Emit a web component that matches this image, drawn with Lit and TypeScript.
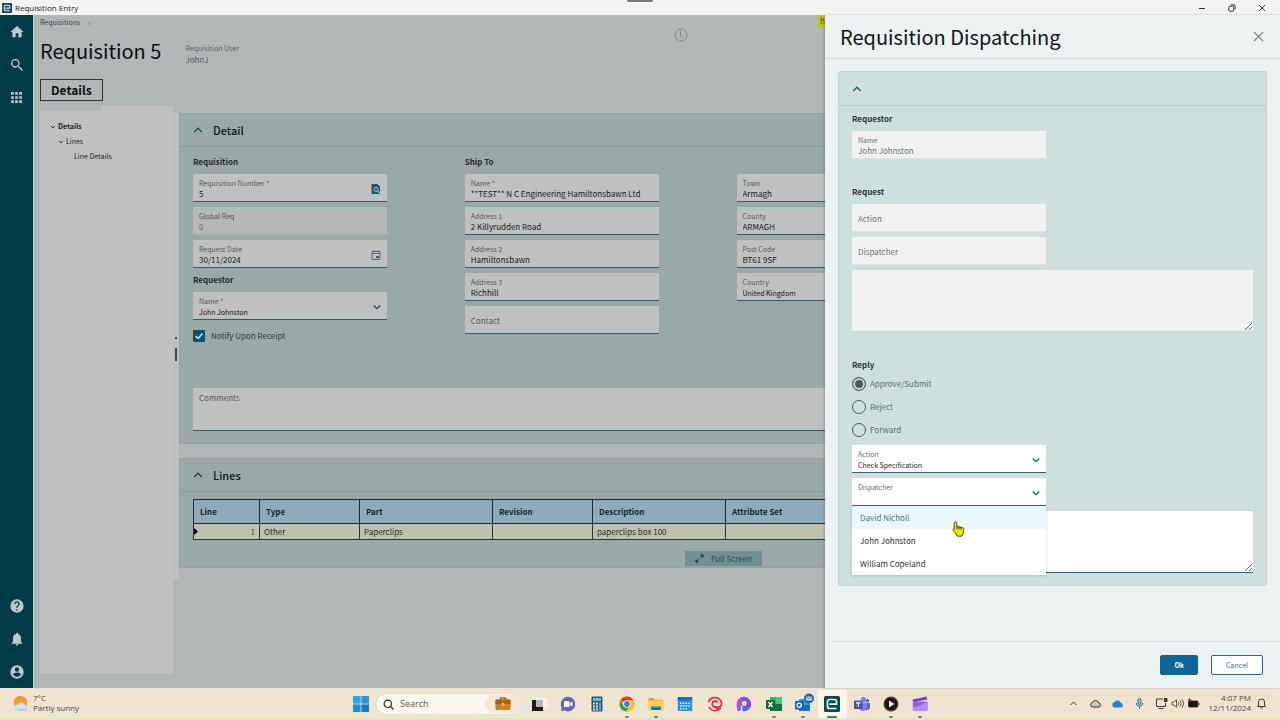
import { LitElement, html, svg, css, nothing } from "lit";
import { customElement, state } from "lit/decorators.js";
import { classMap } from "lit/directives/class-map.js";

const chevronUp = html`<svg class="chev" viewBox="0 0 10 10" aria-hidden="true"><path d="M1.2 7 5 3.2 8.8 7" /></svg>`;
const chevronDown = html`<svg class="chev chev-field" viewBox="0 0 10 10" aria-hidden="true"><path d="M1.8 3.5 5 6.7 8.2 3.5" /></svg>`;
const treeArrow = html`<svg class="tree-arrow" viewBox="0 0 6 6" aria-hidden="true"><path d="M1 2 3 4 5 2" /></svg>`;

const railIcons: Record<string, unknown> = {
  Home: svg`<path d="M10 20v-6h4v6h5v-8h3L12 3 2 12h3v8z" />`,
  Search: svg`<path d="M15.5 14h-.8l-.3-.3A6.5 6.5 0 1 0 13.700 14.400l.3.3v.8l5.400 5.500 1.600-1.600zM9.500 14a4.500 4.500 0 1 1 0-9 4.500 4.500 0 0 1 0 9z" />`,
  Menu: svg`<path d="M2 2h5v5H2zM9.500 2h5v5h-5zM17 2h5v5h-5zM2 9.500h5v5H2zM9.500 9.500h5v5h-5zM17 9.500h5v5h-5zM2 17h5v5H2zM9.500 17h5v5h-5zM17 17h5v5h-5z" />`,
  Help: svg`<path d="M12 2a10 10 0 1 0 0 20 10 10 0 0 0 0-20zm1 17h-2v-2h2zm2.070-7.750-.9.920C13.450 12.900 13 13.500 13 15h-2v-.5c0-1.100.450-2.100 1.170-2.830l1.240-1.260A2 2 0 1 0 10 9H8a4 4 0 1 1 8 0c0 .88-.36 1.680-.93 2.250z" />`,
  Notifications: svg`<path d="M12 22a2 2 0 0 0 2-2h-4a2 2 0 0 0 2 2zm6-6v-5c0-3.070-1.640-5.640-4.500-6.320V4a1.500 1.500 0 0 0-3 0v.68C7.630 5.360 6 7.920 6 11v5l-2 2v1h16v-1z" />`,
  Account: svg`<path d="M12 2a10 10 0 1 0 0 20 10 10 0 0 0 0-20zm0 3a3.300 3.300 0 1 1 0 6.600A3.300 3.300 0 0 1 12 5zm0 14.200a7.200 7.200 0 0 1-6-3.220c.03-1.990 4-3.080 6-3.080s5.970 1.090 6 3.080a7.200 7.200 0 0 1-6 3.220z" />`,
};

const epicor = svg`<rect width="16" height="16" rx="1.500" fill="#0b4a54" /><path d="M12.500 12.500H5.500a2 2 0 0 1-2-2v-5a2 2 0 0 1 2-2h5a2 2 0 0 1 2 2v2.700h-7" fill="none" stroke="#e8f4f4" stroke-width="1.700" />`;

const taskIcons: { name: string; art: unknown; open?: boolean; active?: boolean }[] = [
  { name: "Task view", art: svg`<rect x="5" y="2" width="11" height="9" fill="#f6f4f0" /><path d="M1 4h4v7h7v4H1z" fill="#1d1b1a" /><rect x="5" y="4" width="7" height="7" fill="#b9b5b2" />` },
  { name: "Chat", art: svg`<path d="M8 .8a7.300 7.300 0 1 1-3.500 13.700L.8 15.300l.9-3.600A7.300 7.300 0 0 1 8 .8z" fill="#6a62b8" /><rect x="4" y="5" width="5.500" height="6" rx="1" fill="#fff" /><path d="m10 7.300 2.500-1.800v5L10 8.700z" fill="#fff" />` },
  { name: "Calculator", art: svg`<rect x="2.500" y=".5" width="11" height="15" rx="1" fill="#38566e" /><rect x="4" y="2" width="8" height="3" fill="#58c3e8" /><g fill="#d8e2e8"><rect x="4" y="6.500" width="2" height="2" /><rect x="7" y="6.500" width="2" height="2" /><rect x="4" y="9.500" width="2" height="2" /><rect x="7" y="9.500" width="2" height="2" /><rect x="4" y="12.500" width="2" height="2" /><rect x="7" y="12.500" width="2" height="2" /></g><path d="M10 6.500h2v8h-2z" fill="#3fa9dc" />` },
  { name: "Chrome", open: true, art: svg`<circle cx="8" cy="8" r="7.500" fill="#fbc116" /><path d="M8 8 1.500 4.250A7.500 7.500 0 0 1 14.500 4.250z" fill="#e33b2e" /><path d="M1.500 4.250A7.500 7.500 0 0 0 7.200 15.460L11 9.700 8 8 4.900 10z" fill="#2da24c" /><path d="M8 4.250h6.500A7.500 7.500 0 0 1 7.200 15.460L11.200 9.800z" fill="#fbc116" /><circle cx="8" cy="8" r="3.800" fill="#fff" /><circle cx="8" cy="8" r="2.900" fill="#3f7de8" />` },
  { name: "File Explorer", open: true, art: svg`<path d="M.5 2h5l1.500 1.800h8V6H.5z" fill="#e3a325" /><rect x=".5" y="4.500" width="15" height="9.500" rx="1" fill="#fbd04f" /><path d="M3 10.500h10V14H3z" fill="#2f86c8" /><path d="M4.500 12h7v2h-7z" fill="#1d64a0" />` },
  { name: "Calendar", art: svg`<rect x=".8" y="1" width="14.400" height="14" rx="1" fill="#2a90d6" /><rect x=".8" y="1" width="14.400" height="3.500" fill="#1a6fb4" /><g fill="#e9f5fd"><path d="M3 6.500h1.500V8H3zM5.800 6.500h1.500V8H5.800zM8.600 6.500h1.500V8H8.600zM11.400 6.500h1.500V8h-1.500zM3 9.200h1.500v1.500H3zM5.800 9.200h1.500v1.500H5.800zM8.600 9.200h1.500v1.500H8.600zM11.400 9.200h1.500v1.500h-1.500zM3 12h1.500v1.500H3zM5.800 12h1.500v1.500H5.800zM8.600 12h1.500v1.500H8.600z" /></g>` },
  { name: "Recorder", art: svg`<circle cx="8" cy="8" r="7.500" fill="#f4dcd6" /><g fill="none" stroke="#d3343c"><path d="M1.500 6A6.800 6.800 0 0 1 14.600 7.500c.2 3-3 4.500-5.600 3.200" stroke-width="1.800" /><path d="M14 11.500A7 7 0 0 1 2 11" stroke-width="1.500" /><path d="M10.800 6.500A3 3 0 1 0 8 11l3.500 2.800" stroke-width="1.800" /></g>` },
  { name: "Loop", art: svg`<path d="M8 .8a7.200 7.200 0 0 1 0 14.400c-1.500 0-1.500-1.200-1.500-2.200V9.500H4.800c0 3-.2 5.700-1.800 5.700S.8 12 .8 8A7.200 7.200 0 0 1 8 .8z" fill="#7a4fdc" /><path d="M8 .8A7.200 7.200 0 0 0 .8 8c0 4 .6 7.200 2.200 7.200 1 0 1.500-1.200 1.700-3C4 7 5.500 4 10 1z" fill="#b04be0" /><path d="M8 15.200c-1.500 0-1.500-1.200-1.500-2.200l8-3A7.200 7.200 0 0 1 8 15.200z" fill="#2e7fe6" /><circle cx="8.300" cy="7.500" r="2.400" fill="#efe6d2" />` },
  { name: "Excel", open: true, art: svg`<rect x="4" y="1" width="12" height="14" rx="1" fill="#2fae6c" /><path d="M10 1h5a1 1 0 0 1 1 1v6h-6z" fill="#3ecb86" /><path d="M4 8h12v6a1 1 0 0 1-1 1H5a1 1 0 0 1-1-1z" fill="#17703f" /><rect y="4" width="9" height="9" rx="1" fill="#12693a" /><path d="m2.500 6 4 5m0-5-4 5" stroke="#fff" stroke-width="1.300" />` },
  { name: "Outlook", open: true, art: svg`<rect x="4" y="3" width="11" height="12" rx="1" fill="#2f97e0" /><path d="M4 9h11v5a1 1 0 0 1-1 1H4z" fill="#1b6fc0" /><rect y="5" width="8.500" height="8.500" rx="1" fill="#0f5fb0" /><circle cx="4.200" cy="9.200" r="2.100" fill="none" stroke="#fff" stroke-width="1.300" /><circle cx="14" cy="2.500" r="5" fill="#2468a8" /><rect x="11.200" y=".6" width="5.600" height="3.900" fill="#d5e8f8" /><path d="m11.200.8 2.800 2 2.800-2" fill="none" stroke="#2468a8" stroke-width=".8" />` },
  { name: "Epicor", open: true, active: true, art: epicor },
  { name: "Teams", art: svg`<circle cx="13.500" cy="4.800" r="1.800" fill="#5b62c6" /><circle cx="9.500" cy="3.500" r="2.600" fill="#7b83eb" /><path d="M11 7h5v4a3 3 0 0 1-4 2.800z" fill="#5b62c6" /><path d="M5 6.500h8v4.500a4 4 0 0 1-8 0z" fill="#7b83eb" /><rect y="4.500" width="8.500" height="8.500" rx="1" fill="#4a52b4" /><path d="M2 6.800h4.500M4.250 6.800V11" stroke="#fff" stroke-width="1.200" />` },
  { name: "Media player", open: true, art: svg`<circle cx="8" cy="8" r="7.500" fill="#53403a" /><circle cx="8" cy="8" r="6.200" fill="#191718" /><path d="M6 4.500 11.500 8 6 11.500z" fill="#f3f1ee" /><path d="M1.500 12A7.500 7.500 0 0 0 8 15.500" stroke="#e0813a" fill="none" />` },
  { name: "Clipchamp", open: true, art: svg`<path d="M.5 3.500 14.500.5l.8 3L1.200 6.200z" fill="#7b3fd0" /><rect x=".8" y="5.500" width="14.700" height="9.500" rx="1.200" fill="#9a5fe6" /><path d="M.8 11c5 0 9-2 14.700-5v8a1 1 0 0 1-1 1H2a1.200 1.200 0 0 1-1.200-1.200z" fill="#b98af0" />` },
];

interface FieldSpec {
  id: string;
  label: string;
  value?: string;
  kind?: "text" | "select";
  tone?: "dim" | "locked" | "off" | "live";
  icon?: unknown;
}

const lookupIcon = html`<svg class="field-icon" viewBox="0 0 12 12" aria-hidden="true"><path d="M1.500 1h6l2.500 2.500V11h-8.500z" fill="#1d5873" /><circle cx="6" cy="6.300" r="2" fill="none" stroke="#c0c0c0" stroke-width="1" /><path d="m7.400 7.700 2.600 2.800" stroke="#c0c0c0" stroke-width="1.100" /></svg>`;
const dateIcon = html`<svg class="field-icon" viewBox="0 0 12 12" aria-hidden="true"><rect x="2" y="2.500" width="8" height="8" rx=".8" fill="none" stroke="#4a606c" stroke-width=".9" /><path d="M4 1v2M8 1v2M2 4.500h8" stroke="#4a606c" stroke-width=".9" /><rect x="6.300" y="7" width="2.400" height="2.200" fill="#2f4450" /></svg>`;

@customElement("app-root")
export class AppRoot extends LitElement {
  @state() private reply = "Approve/Submit";
  @state() private hovered = "David Nicholl";

  static styles = css`
    :host {
      display: flex;
      flex-direction: column;
      height: 100vh;
      overflow: hidden;
      font-family: "Noto Sans CJK SC", "Noto Sans", sans-serif;
      font-size: 8px;
      line-height: 12px;
      color: #1c2426;
    }
    * { box-sizing: border-box; }
    button, input, select, textarea { font: inherit; color: inherit; margin: 0; }
    button { border: 0; background: none; padding: 0; }
    h1, h2, h3, p, ul { margin: 0; padding: 0; font-weight: inherit; font-size: inherit; }
    ul { list-style: none; }

    .titlebar {
      position: relative;
      flex: none;
      display: flex;
      align-items: center;
      height: 15px;
      padding: 0 10px 0 2px;
      gap: 3px;
      background: #f3f3f3;
      font-family: "Open Sans", sans-serif;
      font-size: 8px;
      color: #222;
    }
    .titlebar-logo { width: 10px; height: 10px; }
    .grip { position: absolute; left: 50%; top: 0; width: 26px; height: 2px; margin-left: -13px; background: #77757a; border-radius: 0 0 2px 2px; }
    .window-buttons { display: flex; gap: 14px; margin-left: auto; }
    .window-button { display: flex; width: 16px; justify-content: center; }
    .window-button svg { width: 8px; height: 8px; fill: none; stroke: #333; stroke-width: 1; }

    .work { position: relative; flex: 1; min-height: 0; display: flex; }
    .rail { flex: none; width: 33px; display: flex; flex-direction: column; justify-content: space-between; background: #023c48; }
    .rail-group { display: flex; flex-direction: column; }
    .rail-button { height: 33px; display: flex; align-items: center; justify-content: center; }
    .rail-button svg { width: 16px; height: 16px; fill: #bdc9cc; }
    .rail-button .icon-small { width: 13px; height: 13px; }

    .page { flex: 1; min-width: 0; display: flex; flex-direction: column; padding: 0 0 14px 6px; border-left: 1px solid #c2cccc; background: #b0b7b7; }
    .topline { display: flex; align-items: flex-start; height: 22px; }
    .crumbs { display: flex; gap: 8px; padding-top: 1px; font-size: 7px; color: #3d4646; }
    .crumbs a { color: inherit; text-decoration: none; }
    .top-tools { display: flex; justify-content: space-between; align-items: flex-start; margin-left: auto; width: 606px; }
    .clock { width: 14px; height: 14px; margin-top: 13px; fill: none; stroke: #7b8686; }
    .marker { width: 462px; height: 13px; padding-left: 2px; background: #c1c50c; color: #4b4c10; font-size: 8px; }
    .heading { display: flex; align-items: flex-start; gap: 24px; height: 42px; }
    .title { font-size: 20px; line-height: 28px; color: #0c0f10; }
    .user { padding-top: 6px; line-height: 11px; color: #586162; font-size: 7px; }
    .user-value { font-size: 8px; }
    .tab { align-self: flex-start; height: 22px; padding: 0 10px; border: 1px solid #2f3436; font-size: 12px; line-height: 20px; font-weight: 700; color: #0c0f10; }

    .columns { flex: 1; min-height: 0; display: flex; align-items: stretch; padding-top: 5px; }
    .tree { width: 133px; background: #c0c0c0; color: #1e2425; font-size: 7px; }
    .tree-notch { width: 61px; height: 5px; background: #b0b7b7; }
    .tree-list { padding: 8px 0 0 10px; line-height: 15px; }
    .tree-item { display: flex; align-items: center; gap: 2px; }
    .tree-strong { font-weight: 700; }
    .tree-two { padding-left: 8px; }
    .tree-three { padding-left: 24px; }
    .tree-arrow { width: 6px; height: 6px; fill: none; stroke: #3b4446; stroke-width: 1; }
    .stage { flex: 1; min-width: 0; align-self: flex-start; display: flex; padding-top: 7px; }
    .splitter { width: 6px; margin-bottom: -12px; padding-top: 5px; background: #bebfbf; display: flex; flex-direction: column; align-items: center; justify-content: center; gap: 9px; }
    .splitter-dot { width: 2px; height: 2px; background: #222; border-radius: 1px; }
    .splitter-bar { width: 2px; height: 13px; background: #454545; }
    .cards { flex: 1; min-width: 0; display: flex; flex-direction: column; gap: 14px; padding-right: 12px; }
    .card { background: #9aa8a7; border: 1px solid #93a2a1; }
    .card-head { display: flex; align-items: center; gap: 10px; height: 33px; padding: 0 13px; border-bottom: 1px solid #8a9c9b; }
    .card-title { font-size: 11px; line-height: 18px; font-weight: 500; color: #101617; }
    .chev { width: 10px; height: 10px; fill: none; stroke: #1c4a5c; stroke-width: 1.3; }
    .card-body { padding: 8px 13px 12px; }
    .grid { display: grid; grid-template-columns: repeat(4, 1fr); gap: 26px; min-height: 233px; }
    .stack { display: flex; flex-direction: column; gap: 5px; max-width: 194px; }
    .group { line-height: 14px; font-weight: 700; color: #222c2e; }

    .field { display: flex; align-items: center; height: 28px; padding: 3px 5px 0 6px; background: #c0c0c0; border-bottom: 1px solid #33596b; color: #15191a; }
    .field-text { flex: 1; min-width: 0; display: flex; flex-direction: column; }
    .field-label { font-size: 7px; line-height: 10px; color: #515859; }
    .field-input { width: 100%; height: 12px; line-height: 12px; padding: 0; border: 0; outline: 0; background: transparent; appearance: none; text-overflow: ellipsis; opacity: 1; }
    .field-select { font-size: 7px; }
    .field-empty { padding-top: 2px; }
    .field-empty .field-text { display: grid; }
    .field-empty .field-label, .field-empty .field-input { grid-area: 1 / 1; font-size: 8px; line-height: 12px; }
    .field-icon { width: 12px; height: 12px; }
    .chev-field { stroke: #2b4550; }
    .tone-locked { background: #b7b7b8; border-bottom-color: #a5adad; color: #5c6263; }
    .tone-off { background: #f1f1f1; border-bottom-color: #dde3e3; color: #6c7273; }
    .tone-off .field-label { color: #6a7071; }
    .tone-live { background: #fff; border-bottom-color: #2f6478; color: #1f2527; }
    .tone-live .field-label { color: #666d6f; }
    .tone-live .chev-field { stroke: #14606b; }

    .tick { display: flex; align-items: center; gap: 6px; padding-top: 5px; color: #333b3c; }
    .tick-box { display: grid; width: 12px; height: 12px; }
    .tick-box input { grid-area: 1 / 1; appearance: none; width: 12px; height: 12px; background: #11506e; border-radius: 1px; }
    .tick-box svg { grid-area: 1 / 1; width: 12px; height: 12px; fill: none; stroke: #dbe5e8; stroke-width: 1.500; pointer-events: none; }
    .memo { display: grid; height: 43px; }
    .memo-label { grid-area: 1 / 1; padding: 4px 6px; color: #515859; z-index: 1; pointer-events: none; }
    .memo-input { grid-area: 1 / 1; width: 100%; border: 0; border-bottom: 1px solid #33596b; background: #c0c0c0; resize: none; }

    .lines-body { padding: 7px 13px 1px; }
    .lines { width: 100%; border-collapse: collapse; table-layout: fixed; }
    .lines th { height: 24px; padding: 0 6px; background: #8dabb8; border: 1px solid #1d2a30; text-align: left; font-weight: 700; color: #15252c; }
    .lines td { height: 16px; padding: 0 4px; background: #bfbfae; border: 1px solid #2d3335; line-height: 14px; color: #23292a; }
    .lines .num { text-align: right; color: #4a5051; padding: 0 4px 0 0; }
    .num-cell { display: flex; align-items: center; justify-content: space-between; }
    .row-mark { width: 4px; height: 7px; fill: #000; }
    .col-line { width: 66px; } .col-m { width: 100px; } .col-l { width: 133px; }
    .full-row { display: flex; justify-content: center; padding-top: 11px; }
    .full { display: flex; align-items: center; gap: 7px; height: 15px; padding: 0 10px; background: #6e9294; color: #33474b; }
    .full svg { width: 9px; height: 9px; fill: none; stroke: #17292e; stroke-width: 1; }

    .drawer { position: absolute; top: 0; right: 0; bottom: 0; width: 455px; display: flex; flex-direction: column; background: #ecf2f2; box-shadow: -1px 0 2px rgba(60, 80, 80, 0.35); }
    .drawer-head { display: flex; align-items: center; justify-content: space-between; height: 44px; padding: 0 16px 0 15px; border-bottom: 1px solid #d0d9d9; }
    .drawer-title { font-size: 20px; line-height: 28px; color: #0f1516; }
    .close { display: flex; }
    .close svg { width: 11px; height: 11px; fill: none; stroke: #7d8385; stroke-width: 1.200; }
    .drawer-main { flex: 1; padding: 12px 13px 0; }
    .panel { background: #cfdfde; border: 1px solid #c3d6d5; border-radius: 2px; }
    .panel-head { display: flex; align-items: center; height: 34px; padding: 0 13px; border-bottom: 1px solid #b3cdcd; }
    .panel-head .chev { stroke: #175f70; }
    .panel-body { display: flex; flex-direction: column; padding: 6px 13px 12px; }
    .panel-body .group { color: #2b3537; }
    .requestor, .request, .choice { display: flex; flex-direction: column; gap: 5px; }
    .request { padding-top: 26px; }
    .choice { padding-top: 26px; }
    .panel-body .field { width: 194px; }
    .area { width: 100%; height: 62px; display: block; border: 0; border-bottom: 1px solid #cdd5d5; background: #f1f1f1; resize: vertical; outline: 0; }
    .area-live { background: #fff; border-bottom-color: #2f6478; }
    .radios { display: flex; flex-direction: column; gap: 9px; padding: 0 0 3px; border: 0; margin: 0; }
    .radio { display: flex; align-items: center; gap: 4px; height: 14px; color: #5f6c6d; }
    .radio input { appearance: none; width: 14px; height: 14px; border: 1px solid #4c585a; border-radius: 50%; box-shadow: inset 0 0 0 1px #cfdfde; }
    .radio input:checked { background: #4c585a; box-shadow: inset 0 0 0 2px #cfdfde; }
    .combo { position: relative; width: 194px; }
    .menu { position: absolute; left: 0; top: 28px; width: 100%; z-index: 2; background: #fff; box-shadow: 0 1px 3px rgba(40, 60, 60, 0.2); }
    .option { height: 23px; padding: 0 8px; line-height: 23px; color: #2a3032; }
    .option-on { background: #ebf8fd; color: #477583; }
    .pointer { position: absolute; left: 100px; top: 15px; width: 13px; height: 16px; }
    .drawer-foot { display: flex; justify-content: flex-end; align-items: flex-start; gap: 13px; height: 47px; margin-left: 7px; padding: 13px 17px 0 0; border-top: 1px solid #d8e0e0; }
    .btn { height: 20px; padding: 0 14px; border: 1px solid #0c648f; border-radius: 2px; font-size: 7px; line-height: 18px; }
    .btn-main { background: #0e6696; color: #fff; font-weight: 700; padding: 0 13px; }
    .btn-plain { background: #fff; color: #3d6f83; border-color: #1f6c82; }

    .taskbar { flex: none; display: grid; grid-template-columns: 1fr auto 1fr; align-items: center; height: 32px; background: #eee4d0; border-bottom: 2px solid #dcebb5; font-family: "Open Sans", sans-serif; font-size: 8px; line-height: 10px; color: #4d4740; }
    .weather { display: flex; align-items: center; gap: 4px; padding-left: 13px; }
    .weather svg { width: 16px; height: 16px; }
    .apps { display: flex; align-items: center; padding-top: 2px; }
    .start { width: 31px; display: flex; justify-content: center; }
    .start svg { width: 16px; height: 16px; }
    .find { display: flex; align-items: center; width: 145px; height: 20px; padding-left: 7px; gap: 6px; background: #faf6ec; border-radius: 10px; box-shadow: 0 0 1px #b9ad98; }
    .find svg { width: 11px; height: 11px; fill: none; stroke: #2e2b28; stroke-width: 1.200; }
    .find input { flex: 1; min-width: 0; border: 0; outline: 0; background: none; padding: 0; font-size: 9px; }
    .find input::placeholder { color: #5b564f; opacity: 1; }
    .find .briefcase { width: 36px; height: 18px; border-radius: 9px; background: #f1e8da; stroke: none; }
    .pins { display: grid; grid-template-columns: repeat(14, 1fr); width: 411px; margin-left: 3px; }
    .pin { position: relative; display: flex; justify-content: center; align-items: center; height: 28px; }
    .pin svg { width: 16px; height: 16px; overflow: visible; }
    .pin-active { background: #faf5ea; border-radius: 2px; }
    .pin-active svg { border-radius: 2px; }
    .pin-dot { position: absolute; left: 50%; bottom: 0; width: 4px; height: 2px; margin-left: -2px; border-radius: 1px; background: #857b6c; }
    .pin-active .pin-dot { width: 10px; margin-left: -5px; background: #2379a8; }
    .tray { display: flex; align-items: center; justify-content: flex-end; padding-right: 12px; gap: 9px; }
    .tray svg { width: 13px; height: 13px; fill: none; stroke: #3a352f; stroke-width: 1; }
    .tray-tight { display: flex; gap: 3px; }
    .tray-end { display: flex; align-items: center; gap: 4px; }
    .when { text-align: right; }
  `;

  private field(f: FieldSpec) {
    const tone = f.tone ?? "dim";
    const off = tone === "locked" || tone === "off";
    const select = f.kind === "select";
    return html`<div class=${classMap({ field: true, [`tone-${tone}`]: true, "field-empty": f.value === undefined })}>
      <div class="field-text">
        <label class="field-label" for=${f.id}>${f.label}</label>
        ${select
          ? html`<select class="field-input field-select" id=${f.id}><option>${f.value}</option></select>`
          : html`<input class="field-input" id=${f.id} type="text" .value=${f.value ?? ""} ?disabled=${off} />`}
      </div>
      ${f.icon ?? nothing}
    </div>`;
  }

  private railButton(name: string, small = false) {
    return html`<button class="rail-button" aria-label=${name}>
      <svg class=${classMap({ "icon-small": small })} viewBox="0 0 24 24">${railIcons[name]}</svg>
    </button>`;
  }

  private titlebar() {
    return html`<header class="titlebar">
      <svg class="titlebar-logo" viewBox="0 0 16 16" aria-hidden="true">${epicor}</svg>
      <span>Requisition Entry</span>
      <span class="grip"></span>
      <div class="window-buttons">
        <button class="window-button" aria-label="Minimize"><svg viewBox="0 0 8 8"><path d="M1 4.500h6" /></svg></button>
        <button class="window-button" aria-label="Restore"><svg viewBox="0 0 8 8"><rect x=".8" y="2.200" width="5" height="5" rx="1" /><path d="M2.800.8h3a1.400 1.400 0 0 1 1.400 1.400v3" /></svg></button>
        <button class="window-button" aria-label="Close window"><svg viewBox="0 0 8 8"><path d="m1 1 6 6M7 1 1 7" /></svg></button>
      </div>
    </header>`;
  }

  private detailCard() {
    return html`<section class="card">
      <div class="card-head">${chevronUp}<h2 class="card-title">Detail</h2></div>
      <div class="card-body">
        <div class="grid">
          <div class="stack">
            <h3 class="group">Requisition</h3>
            ${this.field({ id: "req-number", label: "Requisition Number *", value: "5", icon: lookupIcon })}
            ${this.field({ id: "global-req", label: "Global Req", value: "0", tone: "locked" })}
            ${this.field({ id: "req-date", label: "Request Date", value: "30/11/2024", icon: dateIcon })}
            <h3 class="group">Requestor</h3>
            ${this.field({ id: "req-name", label: "Name *", value: "John Johnston", kind: "select", icon: chevronDown })}
            <label class="tick">
              <span class="tick-box"><input type="checkbox" checked /><svg viewBox="0 0 12 12"><path d="m2.500 6 2.500 2.500 4.500-5" /></svg></span>
              Notify Upon Receipt
            </label>
          </div>
          <div class="stack">
            <h3 class="group">Ship To</h3>
            ${this.field({ id: "ship-name", label: "Name *", value: "**TEST** N C Engineering Hamiltonsbawn Ltd" })}
            ${this.field({ id: "ship-a1", label: "Address 1", value: "2 Killyrudden Road" })}
            ${this.field({ id: "ship-a2", label: "Address 2", value: "Hamiltonsbawn" })}
            ${this.field({ id: "ship-a3", label: "Address 3", value: "Richhill" })}
            ${this.field({ id: "ship-contact", label: "Contact" })}
          </div>
          <div class="stack">
            <h3 class="group">&nbsp;</h3>
            ${this.field({ id: "ship-town", label: "Town", value: "Armagh" })}
            ${this.field({ id: "ship-county", label: "County", value: "ARMAGH" })}
            ${this.field({ id: "ship-post", label: "Post Code", value: "BT61 9SF" })}
            ${this.field({ id: "ship-country", label: "Country", value: "United Kingdom", kind: "select" })}
          </div>
        </div>
        <div class="memo">
          <label class="memo-label" for="comments">Comments</label>
          <textarea class="memo-input" id="comments"></textarea>
        </div>
      </div>
    </section>`;
  }

  private linesCard() {
    return html`<section class="card">
      <div class="card-head">${chevronUp}<h2 class="card-title">Lines</h2></div>
      <div class="lines-body">
        <table class="lines">
          <colgroup><col class="col-line" /><col class="col-m" /><col class="col-l" /><col class="col-m" /><col class="col-l" /><col /></colgroup>
          <thead><tr><th>Line</th><th>Type</th><th>Part</th><th>Revision</th><th>Description</th><th>Attribute Set</th></tr></thead>
          <tbody><tr>
            <td class="num"><div class="num-cell"><svg class="row-mark" viewBox="0 0 4 7"><path d="M0 0 4 3.500 0 7z" /></svg>1</div></td>
            <td>Other</td><td>Paperclips</td><td></td><td>paperclips box 100</td><td></td>
          </tr></tbody>
        </table>
        <div class="full-row">
          <button class="full"><svg viewBox="0 0 9 9"><path d="M5.500 3.500 8 1M5.500 1H8v2.500M3.500 5.500 1 8M1 5.500V8h2.500" /></svg>Full Screen</button>
        </div>
      </div>
    </section>`;
  }

  private drawer() {
    const people = ["David Nicholl", "John Johnston", "William Copeland"];
    return html`<aside class="drawer" role="dialog" aria-labelledby="drawer-title">
      <div class="drawer-head">
        <h2 class="drawer-title" id="drawer-title">Requisition Dispatching</h2>
        <button class="close" aria-label="Close"><svg viewBox="0 0 11 11"><path d="m1 1 9 9M10 1l-9 9" /></svg></button>
      </div>
      <div class="drawer-main">
        <section class="panel">
          <div class="panel-head">${chevronUp}</div>
          <div class="panel-body">
            <div class="requestor">
              <h3 class="group">Requestor</h3>
              ${this.field({ id: "d-name", label: "Name", value: "John Johnston", tone: "off" })}
            </div>
            <div class="request">
              <h3 class="group">Request</h3>
              ${this.field({ id: "d-action", label: "Action", tone: "off" })}
              ${this.field({ id: "d-disp", label: "Dispatcher", tone: "off" })}
              <textarea class="area" aria-label="Request comment" disabled></textarea>
            </div>
            <div class="choice">
              <h3 class="group" id="reply-label">Reply</h3>
              <div class="radios" role="radiogroup" aria-labelledby="reply-label">
                ${["Approve/Submit", "Reject", "Forward"].map(
                  (r) => html`<label class="radio"><input type="radio" name="reply" .checked=${this.reply === r} @change=${() => (this.reply = r)} />${r}</label>`
                )}
              </div>
              ${this.field({ id: "r-action", label: "Action", value: "Check Specification", kind: "select", tone: "live", icon: chevronDown })}
              <div class="combo">
                ${this.field({ id: "r-disp", label: "Dispatcher", value: "", kind: "select", tone: "live", icon: chevronDown })}
                <ul class="menu" role="listbox" aria-label="Dispatcher">
                  ${people.map(
                    (p) => html`<li class=${classMap({ option: true, "option-on": p === this.hovered })} role="option" aria-selected=${p === this.hovered} @mouseenter=${() => (this.hovered = p)}>${p}</li>`
                  )}
                  <svg class="pointer" viewBox="0 0 13 16" aria-hidden="true"><path d="M3.500.8c1 0 1.400.6 1.400 1.400v3.300l5.600 1c1 .2 1.500.8 1.400 1.800l-.6 4.200-1.500 2.700H5.200L3.400 12 1 9.200c-.5-.8.200-1.600 1.200-1.200V2.200C2.200 1.400 2.600.8 3.500.8z" fill="#e6e800" stroke="#3c3f12" stroke-width=".9" /><path d="M5 5.500v2.700M7 6v2.400M9 6.200v2.300" stroke="#3c3f12" stroke-width="1" /></svg>
                </ul>
              </div>
              <textarea class="area area-live" aria-label="Reply comment"></textarea>
            </div>
          </div>
        </section>
      </div>
      <div class="drawer-foot">
        <button class="btn btn-main">Ok</button>
        <button class="btn btn-plain">Cancel</button>
      </div>
    </aside>`;
  }

  private taskbar() {
    return html`<footer class="taskbar">
      <div class="weather">
        <svg viewBox="0 0 16 16" aria-hidden="true"><circle cx="7.500" cy="7.500" r="6.800" fill="#f29a2e" /><path d="M5 15.500a3 3 0 0 1-.3-6 4.200 4.200 0 0 1 7.500.6 2.800 2.800 0 0 1 .8 5.400z" fill="#d3e2f6" /><path d="M5 15.500h8a2.800 2.800 0 0 0 1.500-1.300H2.800A3 3 0 0 0 5 15.500z" fill="#9dbde8" /></svg>
        <div><div>7°C</div><div>Partly sunny</div></div>
      </div>
      <div class="apps">
        <button class="start" aria-label="Start"><svg viewBox="0 0 16 16"><path d="M0 0h7.600v7.600H0z" fill="#2aa6e6" /><path d="M8.400 0H16v7.600H8.400z" fill="#2197dd" /><path d="M0 8.400h7.600V16H0z" fill="#1c8fd8" /><path d="M8.400 8.400H16V16H8.400z" fill="#0f7ccb" /></svg></button>
        <div class="find">
          <svg viewBox="0 0 11 11" aria-hidden="true"><circle cx="4.800" cy="4.800" r="3.700" /><path d="m7.500 7.500 3 3" /></svg>
          <input type="search" placeholder="Search" aria-label="Search" />
          <svg class="briefcase" viewBox="0 0 36 18" aria-hidden="true"><path d="M15.500 4.500v-1.500h5v1.500" fill="none" stroke="#6b3b12" stroke-width="1.200" /><rect x="10.500" y="4.500" width="15" height="10.500" rx="1" fill="#c8821f" /><path d="M10.500 5.500a1 1 0 0 1 1-1h13a1 1 0 0 1 1 1V9h-15z" fill="#a3621a" /><rect x="16.800" y="8" width="2.500" height="2.800" fill="#f3c44c" /></svg>
        </div>
        <div class="pins">
          ${taskIcons.map(
            (t) => html`<button class=${classMap({ pin: true, "pin-active": !!t.active })} aria-label=${t.name}><svg viewBox="0 0 16 16">${t.art}</svg>${t.open ? html`<span class="pin-dot"></span>` : nothing}</button>`
          )}
        </div>
      </div>
      <div class="tray">
        <svg viewBox="0 0 13 13" aria-hidden="true"><path d="m3.500 8 3-3 3 3" /></svg>
        <svg viewBox="0 0 13 13" aria-hidden="true"><path d="M3.500 10a2.300 2.300 0 0 1-.2-4.500 3.600 3.600 0 0 1 6.600.5A2.100 2.100 0 0 1 10 10z" fill="#cfc8ba" /></svg>
        <svg viewBox="0 0 13 13" aria-hidden="true"><path d="M3.200 10.500a2.700 2.700 0 0 1 0-5.200 3.800 3.800 0 0 1 6.800.6 2.400 2.400 0 0 1 .3 4.600z" fill="#1f86d2" stroke="none" /></svg>
        <svg viewBox="0 0 13 13" aria-hidden="true"><rect x="5" y="1.500" width="3" height="6" rx="1.500" fill="#a9c3df" stroke="#40648c" /><path d="M3.200 6a3.300 3.300 0 0 0 6.600 0M6.500 9.300V12" stroke="#40648c" /></svg>
        <div class="tray-tight">
          <svg viewBox="0 0 13 13" aria-hidden="true"><path d="M8 2H1.500v7.500h9V6M3.500 11.500h5" /><path d="M9.500 1.500h2.500v3H9.500z" fill="#3a352f" /></svg>
          <svg viewBox="0 0 13 13" aria-hidden="true"><path d="M1 5h1.800L5.500 2.800v7.400L2.800 8H1zM7.200 4.800a2.500 2.500 0 0 1 0 3.400M9 3.500a4.500 4.500 0 0 1 0 6M10.800 2.300a6.500 6.500 0 0 1 0 8.400" stroke-width=".8" /></svg>
          <svg viewBox="0 0 13 13" aria-hidden="true"><rect x="1.500" y="4" width="9.500" height="6" rx="1" fill="#15120f" /><path d="M12 6v2M2.500 1.500v3M1 3h3.500" /></svg>
        </div>
        <div class="tray-end">
          <div class="when"><div>4:07 PM</div><div>12/11/2024</div></div>
          <svg viewBox="0 0 13 13" aria-hidden="true"><path d="M2.500 9.500h8L9.500 8V5a3 3 0 0 0-6 0v3zM5.300 11h2.400" /></svg>
        </div>
      </div>
    </footer>`;
  }

  render() {
    return html`
      ${this.titlebar()}
      <div class="work">
        <nav class="rail" aria-label="Main">
          <div class="rail-group">${this.railButton("Home")}${this.railButton("Search")}${this.railButton("Menu", true)}</div>
          <div class="rail-group">${this.railButton("Help")}${this.railButton("Notifications")}${this.railButton("Account")}</div>
        </nav>
        <main class="page">
          <div class="topline">
            <div class="crumbs"><a href="#requisitions">Requisitions</a><span>›</span></div>
            <div class="top-tools">
              <svg class="clock" viewBox="0 0 14 14" aria-hidden="true"><circle cx="7" cy="7" r="6" stroke-dasharray="5 1" /><path d="M6.500 3v4.300l2.700 2.200" /></svg>
              <div class="marker">h</div>
            </div>
          </div>
          <div class="heading">
            <h1 class="title">Requisition 5</h1>
            <div class="user"><div>Requisition User</div><div class="user-value">JohnJ</div></div>
          </div>
          <button class="tab">Details</button>
          <div class="columns">
            <nav class="tree" aria-label="Sections">
              <div class="tree-notch"></div>
              <ul class="tree-list">
                <li class="tree-item tree-strong">${treeArrow}Details</li>
                <li class="tree-item tree-two">${treeArrow}Lines</li>
                <li class="tree-item tree-three">Line Details</li>
              </ul>
            </nav>
            <div class="stage">
              <div class="splitter"><span class="splitter-dot"></span><span class="splitter-bar"></span></div>
              <div class="cards">${this.detailCard()}${this.linesCard()}</div>
            </div>
          </div>
        </main>
        ${this.drawer()}
      </div>
      ${this.taskbar()}
    `;
  }
}
